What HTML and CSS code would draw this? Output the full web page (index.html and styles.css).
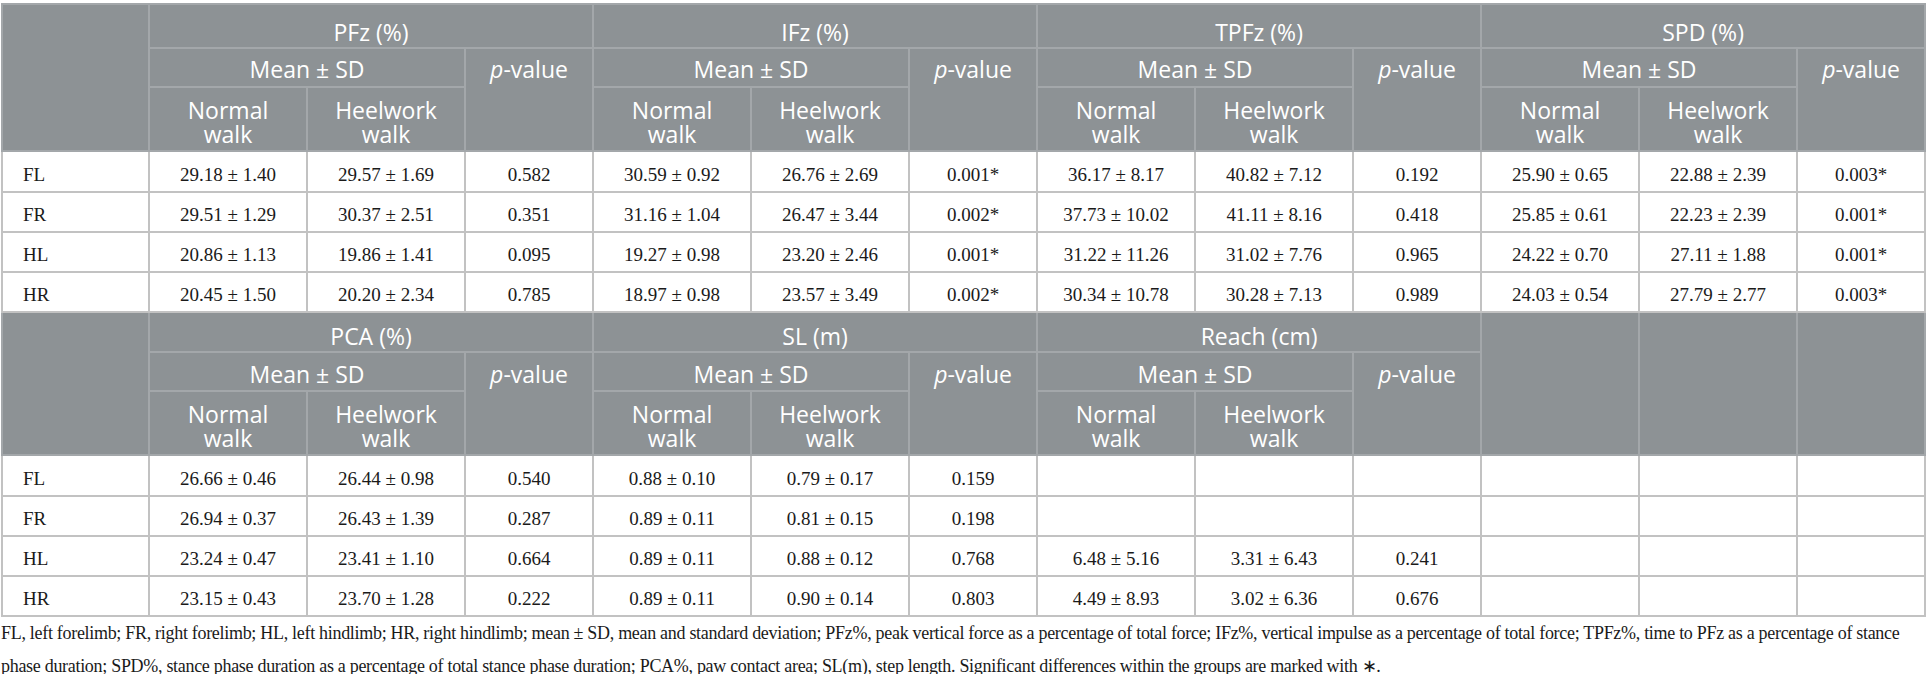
FILE: index.html
```html
<!DOCTYPE html>
<html lang="en">
<head>
    <meta charset="UTF-8">
    <title>Kinetic and kinematic gait parameters</title>
    <link rel="stylesheet" href="styles.css">
</head>
<body>
    <table class="gait">
        <colgroup>
            <col class="c-stub">
            <col class="c-val"><col class="c-val"><col class="c-p">
            <col class="c-val"><col class="c-val"><col class="c-p">
            <col class="c-val"><col class="c-val"><col class="c-p">
            <col class="c-val"><col class="c-val"><col class="c-p">
        </colgroup>

        <!-- Block 1: force parameters -->
        <tr class="h-top">
            <th rowspan="3"></th>
            <th colspan="3">PFz (%)</th>
            <th colspan="3">IFz (%)</th>
            <th colspan="3">TPFz (%)</th>
            <th colspan="3">SPD (%)</th>
        </tr>
        <tr class="h-mid">
            <th colspan="2">Mean &plusmn; SD</th><th rowspan="2"><i>p</i>-value</th>
            <th colspan="2">Mean &plusmn; SD</th><th rowspan="2"><i>p</i>-value</th>
            <th colspan="2">Mean &plusmn; SD</th><th rowspan="2"><i>p</i>-value</th>
            <th colspan="2">Mean &plusmn; SD</th><th rowspan="2"><i>p</i>-value</th>
        </tr>
        <tr class="h-sub">
            <th>Normal<br>walk</th><th>Heelwork<br>walk</th>
            <th>Normal<br>walk</th><th>Heelwork<br>walk</th>
            <th>Normal<br>walk</th><th>Heelwork<br>walk</th>
            <th>Normal<br>walk</th><th>Heelwork<br>walk</th>
        </tr>
        <tr class="first">
            <td class="stub">FL</td>
            <td>29.18 &plusmn; 1.40</td><td>29.57 &plusmn; 1.69</td><td>0.582</td>
            <td>30.59 &plusmn; 0.92</td><td>26.76 &plusmn; 2.69</td><td>0.001*</td>
            <td>36.17 &plusmn; 8.17</td><td>40.82 &plusmn; 7.12</td><td>0.192</td>
            <td>25.90 &plusmn; 0.65</td><td>22.88 &plusmn; 2.39</td><td>0.003*</td>
        </tr>
        <tr>
            <td class="stub">FR</td>
            <td>29.51 &plusmn; 1.29</td><td>30.37 &plusmn; 2.51</td><td>0.351</td>
            <td>31.16 &plusmn; 1.04</td><td>26.47 &plusmn; 3.44</td><td>0.002*</td>
            <td>37.73 &plusmn; 10.02</td><td>41.11 &plusmn; 8.16</td><td>0.418</td>
            <td>25.85 &plusmn; 0.61</td><td>22.23 &plusmn; 2.39</td><td>0.001*</td>
        </tr>
        <tr>
            <td class="stub">HL</td>
            <td>20.86 &plusmn; 1.13</td><td>19.86 &plusmn; 1.41</td><td>0.095</td>
            <td>19.27 &plusmn; 0.98</td><td>23.20 &plusmn; 2.46</td><td>0.001*</td>
            <td>31.22 &plusmn; 11.26</td><td>31.02 &plusmn; 7.76</td><td>0.965</td>
            <td>24.22 &plusmn; 0.70</td><td>27.11 &plusmn; 1.88</td><td>0.001*</td>
        </tr>
        <tr>
            <td class="stub">HR</td>
            <td>20.45 &plusmn; 1.50</td><td>20.20 &plusmn; 2.34</td><td>0.785</td>
            <td>18.97 &plusmn; 0.98</td><td>23.57 &plusmn; 3.49</td><td>0.002*</td>
            <td>30.34 &plusmn; 10.78</td><td>30.28 &plusmn; 7.13</td><td>0.989</td>
            <td>24.03 &plusmn; 0.54</td><td>27.79 &plusmn; 2.77</td><td>0.003*</td>
        </tr>

        <!-- Block 2: contact area, step length, reach -->
        <tr class="h-top h-second">
            <th rowspan="3"></th>
            <th colspan="3">PCA (%)</th>
            <th colspan="3">SL (m)</th>
            <th colspan="3">Reach (cm)</th>
            <th rowspan="3"></th><th rowspan="3"></th><th rowspan="3"></th>
        </tr>
        <tr class="h-mid">
            <th colspan="2">Mean &plusmn; SD</th><th rowspan="2"><i>p</i>-value</th>
            <th colspan="2">Mean &plusmn; SD</th><th rowspan="2"><i>p</i>-value</th>
            <th colspan="2">Mean &plusmn; SD</th><th rowspan="2"><i>p</i>-value</th>
        </tr>
        <tr class="h-sub">
            <th>Normal<br>walk</th><th>Heelwork<br>walk</th>
            <th>Normal<br>walk</th><th>Heelwork<br>walk</th>
            <th>Normal<br>walk</th><th>Heelwork<br>walk</th>
        </tr>
        <tr class="first">
            <td class="stub">FL</td>
            <td>26.66 &plusmn; 0.46</td><td>26.44 &plusmn; 0.98</td><td>0.540</td>
            <td>0.88 &plusmn; 0.10</td><td>0.79 &plusmn; 0.17</td><td>0.159</td>
            <td></td><td></td><td></td>
            <td></td><td></td><td></td>
        </tr>
        <tr>
            <td class="stub">FR</td>
            <td>26.94 &plusmn; 0.37</td><td>26.43 &plusmn; 1.39</td><td>0.287</td>
            <td>0.89 &plusmn; 0.11</td><td>0.81 &plusmn; 0.15</td><td>0.198</td>
            <td></td><td></td><td></td>
            <td></td><td></td><td></td>
        </tr>
        <tr>
            <td class="stub">HL</td>
            <td>23.24 &plusmn; 0.47</td><td>23.41 &plusmn; 1.10</td><td>0.664</td>
            <td>0.89 &plusmn; 0.11</td><td>0.88 &plusmn; 0.12</td><td>0.768</td>
            <td>6.48 &plusmn; 5.16</td><td>3.31 &plusmn; 6.43</td><td>0.241</td>
            <td></td><td></td><td></td>
        </tr>
        <tr>
            <td class="stub">HR</td>
            <td>23.15 &plusmn; 0.43</td><td>23.70 &plusmn; 1.28</td><td>0.222</td>
            <td>0.89 &plusmn; 0.11</td><td>0.90 &plusmn; 0.14</td><td>0.803</td>
            <td>4.49 &plusmn; 8.93</td><td>3.02 &plusmn; 6.36</td><td>0.676</td>
            <td></td><td></td><td></td>
        </tr>
    </table>

    <p class="note">FL, left forelimb; FR, right forelimb; HL, left hindlimb; HR, right hindlimb; mean &plusmn; SD, mean and standard deviation; PFz%, peak vertical force as a percentage of total force; IFz%, vertical impulse as a percentage of total force; TPFz%, time to PFz as a percentage of stance phase duration; SPD%, stance phase duration as a percentage of total stance phase duration; PCA%, paw contact area; SL(m), step length. Significant differences within the groups are marked with &lowast;.</p>
</body>
</html>
```

FILE: styles.css
```css
body {
    margin: 3px 0 0 1px;
    background: #ffffff;
    font-family: "Liberation Serif", "Times New Roman", serif;
    color: #1a1a1a;
}

.gait {
    width: 1925px;
    table-layout: fixed;
    border-collapse: collapse;
    border: 2px solid #c2c2c2;
}

.c-stub { width: 147px; }
.c-val { width: 158px; }
.c-p { width: 128px; }

th {
    background-color: #8d9295;
    color: #ffffff;
    font-family: "Open Sans", Lato, sans-serif;
    font-weight: 400;
    font-size: 23px;
    line-height: 24px;
    text-align: center;
    vertical-align: top;
    border: 2px solid #a3a7aa;
    padding: 0;
    box-sizing: border-box;
}

.h-top th {
    height: 44px;
    padding-top: 15px;
}

.h-second th {
    height: 40px;
    padding-top: 11px;
}

.h-mid th {
    height: 39px;
    padding-top: 8px;
}

.h-second + .h-mid th {
    padding-top: 9px;
}

.h-sub th {
    height: 64px;
    padding-top: 10px;
}

th i {
    font-style: italic;
}

td {
    height: 40px;
    padding: 6px 0 0;
    box-sizing: border-box;
    border: 2px solid #c2c2c2;
    font-size: 19px;
    text-align: center;
    vertical-align: middle;
}

tr.first td {
    height: 41px;
}

td.stub {
    text-align: left;
    padding-left: 20px;
}

.note {
    width: 1925px;
    margin: 0;
    font-size: 18px;
    line-height: 33px;
    letter-spacing: -0.3px;
    color: #1a1a1a;
}
```
